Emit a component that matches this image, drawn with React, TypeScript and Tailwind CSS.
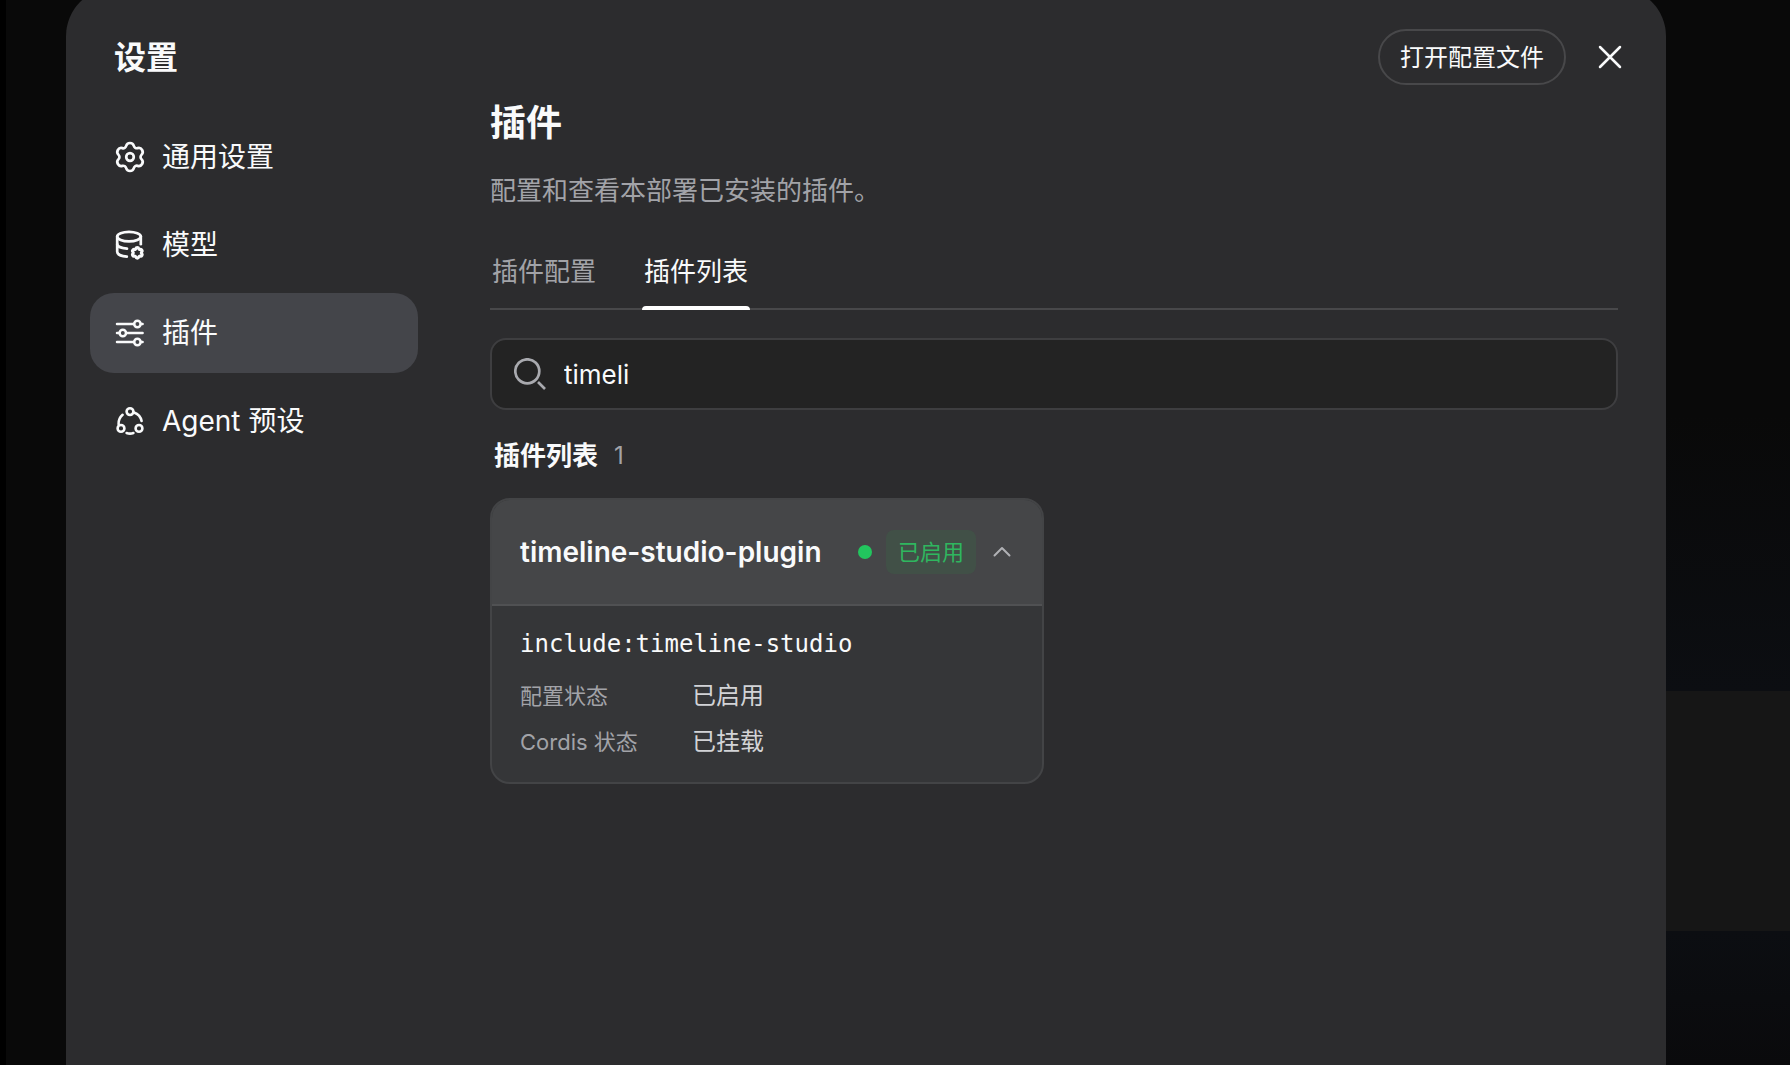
import { useState } from "react";
import type { ReactNode, SVGProps } from "react";

type IconProps = SVGProps<SVGSVGElement>;

function Icon({ children, ...props }: IconProps & { children: ReactNode }) {
  return (
    <svg
      viewBox="0 0 32 32"
      fill="none"
      stroke="currentColor"
      strokeWidth={2.7}
      strokeLinecap="round"
      strokeLinejoin="round"
      aria-hidden="true"
      className="size-8 shrink-0"
      {...props}
    >
      {children}
    </svg>
  );
}

const GEAR_PATH =
  "M12.13 5.01A4 4 0 0 1 19.87 5.01A3 3 0 0 0 23.59 7.15A4 4 0 0 1 27.46 13.86A3 3 0 0 0 27.46 18.14A4 4 0 0 1 23.59 24.85A3 3 0 0 0 19.87 26.99A4 4 0 0 1 12.13 26.99A3 3 0 0 0 8.41 24.85A4 4 0 0 1 4.54 18.14A3 3 0 0 0 4.54 13.86A4 4 0 0 1 8.41 7.15A3 3 0 0 0 12.13 5.01Z";

function GeneralIcon() {
  return (
    <Icon>
      <path d={GEAR_PATH} />
      <circle cx="16" cy="16" r="3.8" />
    </Icon>
  );
}

function ModelIcon() {
  return (
    <Icon>
      <ellipse cx="15" cy="7.6" rx="11.8" ry="4.8" />
      <path d="M3.2 7.6v15.2c0 2.4 4 4.4 9.6 4.8" />
      <path d="M3.2 15.2c0 2.2 4 4 9.8 4.4" />
      <path d="M26.8 7.6v7.6" />
      <g transform="translate(23.3 23.8) scale(0.38) translate(-16 -16)">
        <path d={GEAR_PATH} strokeWidth={8} />
      </g>
    </Icon>
  );
}

function PluginIcon() {
  return (
    <Icon strokeWidth={2.5}>
      <path d="M3 7h17M27 7h1.6M3 16h2.2M12.4 16h16.2M3 25h17M27 25h1.6" />
      <circle cx="23.4" cy="7" r="3.2" />
      <circle cx="8.8" cy="16" r="3.2" />
      <circle cx="23.4" cy="25" r="3.2" />
    </Icon>
  );
}

function AgentIcon() {
  return (
    <Icon strokeWidth={2.6}>
      <circle cx="16" cy="6.6" r="3.4" />
      <circle cx="7" cy="23.4" r="3.4" />
      <circle cx="25" cy="23.4" r="3.4" />
      <path d="M20 7.4a11.6 11.6 0 0 1 7.6 8.6" />
      <path d="M8.6 9.8a11.6 11.6 0 0 0-4 9.4" />
      <path d="M12.6 28c2.2.8 4.6.8 6.8 0" />
    </Icon>
  );
}

const NAV_ITEMS = [
  { id: "general", label: "通用设置", icon: <GeneralIcon /> },
  { id: "model", label: "模型", icon: <ModelIcon /> },
  { id: "plugin", label: "插件", icon: <PluginIcon /> },
  { id: "agent", label: "Agent 预设", icon: <AgentIcon /> },
];

const TABS = [
  { id: "config", label: "插件配置" },
  { id: "list", label: "插件列表" },
];

const PLUGINS = [
  {
    name: "timeline-studio-plugin",
    source: "include:timeline-studio",
    status: "已启用",
    details: [
      { label: "配置状态", value: "已启用" },
      { label: "Cordis 状态", value: "已挂载" },
    ],
  },
];

function Sidebar() {
  const [active, setActive] = useState("plugin");

  return (
    <nav className="flex w-[328px] shrink-0 flex-col gap-2 pt-8">
      {NAV_ITEMS.map((item) => (
        <button
          key={item.id}
          type="button"
          onClick={() => setActive(item.id)}
          className={`flex h-20 items-center gap-4 rounded-3xl px-6 text-[28px] ${
            active === item.id ? "bg-[#44454a]" : ""
          }`}
        >
          {item.icon}
          {item.label}
        </button>
      ))}
    </nav>
  );
}

function PluginCard({ plugin }: { plugin: (typeof PLUGINS)[number] }) {
  const [open, setOpen] = useState(true);

  return (
    <article className="overflow-hidden rounded-[20px] border-2 border-[#434446] bg-[#353638]">
      <button
        type="button"
        aria-expanded={open}
        onClick={() => setOpen(!open)}
        className="flex h-[106px] w-full items-center gap-[14px] border-b-2 border-[#505153] bg-[#454648] px-7 text-left"
      >
        <span className="flex-1 text-[28px] font-semibold">{plugin.name}</span>
        <span className="size-[14px] rounded-full bg-[#22c55e]" />
        <span className="rounded-lg bg-[#415047] px-3 text-[22px] leading-[44px] text-[#2fb65f]">
          {plugin.status}
        </span>
        <Icon viewBox="0 0 24 24" strokeWidth={2} className="size-6 text-[#b0b1b5]">
          <path d="M4.5 15.5 12 8l7.5 7.5" />
        </Icon>
      </button>
      {open && (
        <div className="px-7 pt-5 pb-[22px]">
          <p className="font-['DejaVu_Sans_Mono',monospace] text-[24px] leading-9">
            {plugin.source}
          </p>
          <dl className="mt-4 grid grid-cols-[160px_1fr] gap-x-3 gap-y-[10px] leading-9">
            {plugin.details.map((detail) => (
              <div key={detail.label} className="contents">
                <dt className="text-[22px] text-[#a2a3a8]">{detail.label}</dt>
                <dd className="text-[24px] text-[#d2d3d6]">{detail.value}</dd>
              </div>
            ))}
          </dl>
        </div>
      )}
    </article>
  );
}

function PluginPanel() {
  const [tab, setTab] = useState("list");
  const [query, setQuery] = useState("timeli");
  const plugins = PLUGINS.filter((plugin) => plugin.name.includes(query));

  return (
    <main className="flex-1 pt-4">
      <h2 className="text-[36px] leading-[44px] font-semibold">插件</h2>
      <p className="mt-7 text-[26px] leading-9 text-[#a2a3a8]">配置和查看本部署已安装的插件。</p>

      <div role="tablist" className="mt-[45px] flex gap-11 border-b-2 border-[#48484a]">
        {TABS.map((item) => (
          <button
            key={item.id}
            type="button"
            role="tab"
            aria-selected={tab === item.id}
            onClick={() => setTab(item.id)}
            className={`relative px-[2px] pb-[18px] text-[26px] leading-9 ${
              tab === item.id
                ? "after:absolute after:inset-x-0 after:-bottom-[2px] after:h-1 after:rounded-t after:bg-white"
                : "text-[#a2a3a8]"
            }`}
          >
            {item.label}
          </button>
        ))}
      </div>

      <label className="mt-7 flex h-[72px] items-center gap-[18px] rounded-2xl border-2 border-[#3e3e40] bg-[#232323] px-[22px]">
        <Icon strokeLinecap="butt" className="size-8 shrink-0 text-[#a9aaaf]">
          <circle cx="13.3" cy="13.3" r="12" />
          <path d="m24 24 7 7" />
        </Icon>
        <input
          type="text"
          aria-label="搜索插件"
          value={query}
          onChange={(e) => setQuery(e.target.value)}
          className="min-w-0 flex-1 bg-transparent text-[26px] outline-none"
        />
      </label>

      <div className="mt-7 flex gap-4 px-1 text-[26px] leading-9">
        <h3 className="font-semibold">插件列表</h3>
        <span className="text-[24px] text-[#a2a3a8]">{plugins.length}</span>
      </div>

      <div className="mt-6 grid grid-cols-2 items-start gap-5">
        {plugins.map((plugin) => (
          <PluginCard key={plugin.name} plugin={plugin} />
        ))}
      </div>
    </main>
  );
}

export default function App() {
  return (
    <div className="flex h-screen overflow-hidden bg-[#090909] font-['Inter','Noto_Sans_CJK_SC',sans-serif] text-[#f9fafb]">
      <div className="w-[6px] shrink-0 bg-black" />

      <div
        role="dialog"
        aria-labelledby="settings-title"
        className="-mt-3 ml-[60px] flex min-w-0 flex-1 flex-col rounded-t-[48px] bg-[#2c2c2e]"
      >
        <header className="flex items-center gap-4 pt-[41px] pr-7 pl-12">
          <h1 id="settings-title" className="flex-1 pt-[2px] text-[32px] font-semibold">
            设置
          </h1>
          <button
            type="button"
            className="h-14 rounded-full border-2 border-[#48484a] px-5 pt-[2px] text-[24px]"
          >
            打开配置文件
          </button>
          <button type="button" aria-label="关闭" className="flex size-14 items-center justify-center">
            <Icon strokeWidth={2.5}>
              <path d="M6 6l20 20M26 6 6 26" />
            </Icon>
          </button>
        </header>

        <div className="flex gap-[72px] pr-12 pl-6">
          <Sidebar />
          <PluginPanel />
        </div>
      </div>

      {/* dimmed page behind the dialog */}
      <div className="flex w-[124px] shrink-0 flex-col">
        <div className="flex-1 bg-linear-to-b from-[#090909] from-60% to-[#0c0e12]" />
        <div className="h-60 bg-[#161616]" />
        <div className="h-[134px] bg-linear-to-b from-[#0c0e12] to-[#0a0a0c]" />
      </div>
    </div>
  );
}
